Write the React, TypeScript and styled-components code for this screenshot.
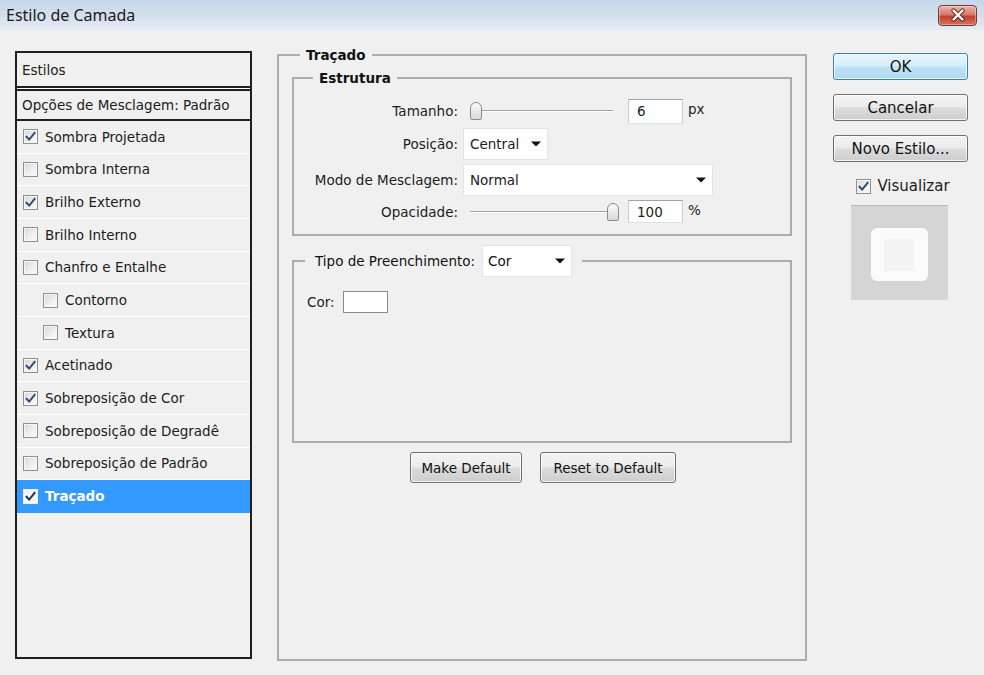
import React from "react";
import styled, { createGlobalStyle } from "styled-components";

const GlobalStyle = createGlobalStyle`
  * { box-sizing: border-box; }
  html, body { margin: 0; padding: 0; background: #f0f0f0; }
  body {
    font-family: "DejaVu Sans", "Liberation Sans", sans-serif;
    font-size: 13.5px;
    color: #1c1c1c;
  }
`;

const Window = styled.div`
  width: 984px;
  height: 675px;
  display: flex;
  flex-direction: column;
  background: #f0f0f0;
  overflow: hidden;
`;

const TitleBar = styled.div`
  height: 30px;
  flex: none;
  display: flex;
  align-items: center;
  justify-content: space-between;
  padding: 0 7px 0 6px;
  background: linear-gradient(to bottom, #c6d7ea 0%, #d3e0ee 55%, #e6ecf3 100%);
`;

const Title = styled.span`
  font-family: "Noto Sans", "DejaVu Sans", sans-serif;
  font-size: 16px;
  color: #1a1a1a;
`;

const CloseButton = styled.div`
  width: 39px;
  height: 21px;
  border: 1px solid #6e3a33;
  border-radius: 4px;
  background: linear-gradient(to bottom, #ecb3a6 0%, #d9796a 45%, #c3402d 55%, #d2735f 100%);
  box-shadow: inset 0 0 0 1px rgba(255, 255, 255, 0.35);
  display: flex;
  align-items: center;
  justify-content: center;
`;

const Main = styled.div`
  flex: 1;
  display: flex;
  align-items: stretch;
  gap: 25px;
  padding: 17px 16px 14px 15px;
`;

/* ---------- left list ---------- */

const StylePanel = styled.div`
  width: 237px;
  flex: none;
  margin: 4px 0 2px;
  border: 2px solid #1f1f1f;
  display: flex;
  flex-direction: column;
  background: #f0f0f0;
`;

const PanelHeader = styled.div`
  height: 35px;
  flex: none;
  display: flex;
  align-items: center;
  padding-left: 5px;
  border-bottom: 2px solid #1f1f1f;
`;

const BlendRow = styled.div`
  height: 33px;
  flex: none;
  display: flex;
  align-items: center;
  padding: 2px 0 0 5px;
  border-top: 1px solid #ffffff;
  border-bottom: 2px solid #1f1f1f;
  box-shadow: inset 0 2px 0 #1f1f1f;
`;

const StyleRow = styled.div<{ $indent?: boolean; $selected?: boolean }>`
  height: 32.67px;
  flex: none;
  display: flex;
  align-items: center;
  gap: 7px;
  padding-left: ${(p) => (p.$indent ? 26 : 6)}px;
  border-bottom: 1px solid ${(p) => (p.$selected ? "#3399ff" : "#ffffff")};
  background: ${(p) => (p.$selected ? "#3399ff" : "transparent")};
  color: ${(p) => (p.$selected ? "#ffffff" : "#1c1c1c")};
  font-weight: ${(p) => (p.$selected ? "bold" : "normal")};
`;

const CheckBox = styled.span<{ $light?: boolean }>`
  width: 15px;
  height: 15px;
  flex: none;
  display: flex;
  align-items: center;
  justify-content: center;
  border: 1px solid ${(p) => (p.$light ? "#e8f0ff" : "#8f9090")};
  background: ${(p) =>
    p.$light ? "#f4f6fb" : "linear-gradient(135deg, #d6d6d6 0%, #f0f0f0 60%, #fbfbfb 100%)"};
  box-shadow: inset 0 0 0 1px ${(p) => (p.$light ? "#ffffff" : "#f6f6f6")};
`;

/* ---------- middle groups ---------- */

const Group = styled.fieldset`
  margin: 0;
  min-width: 0;
  border: 2px solid #adadad;
`;

const MainGroup = styled(Group)`
  width: 530px;
  flex: none;
  padding: 0 13px;
`;

const Legend = styled.legend<{ $offset: number; $pad: number }>`
  margin-left: ${(p) => p.$offset}px;
  padding: 0 ${(p) => p.$pad}px;
  font-weight: bold;
  line-height: 16px;
  color: #111;
`;

const StructureGroup = styled(Group)`
  margin-top: 7px;
  padding: 12px 0 11px 0;
`;

const FormGrid = styled.div`
  display: grid;
  grid-template-columns: 164px 1fr;
  grid-template-rows: 26px 32px 32px 23px;
  column-gap: 5px;
  row-gap: 4px;
  align-items: center;
`;

const FieldLabel = styled.span`
  justify-self: end;
  white-space: nowrap;
`;

const ControlLine = styled.div`
  display: flex;
  align-items: center;
  height: 100%;
`;

const SliderTrack = styled.div`
  position: relative;
  width: 143px;
  height: 20px;
  margin-left: 7px;
  margin-right: 15px;
  display: flex;
  align-items: center;
`;

const TrackLine = styled.div`
  flex: 1;
  height: 2px;
  border-top: 1px solid #a3a3a3;
  border-bottom: 1px solid #ffffff;
`;

const Thumb = styled.div`
  position: absolute;
  top: 1px;
  width: 12px;
  height: 18px;
  border: 1px solid #8b8b8b;
  border-radius: 6px 6px 2px 2px;
  background: linear-gradient(to bottom, #fbfbfb, #d9d9d9);
`;

const NumberBox = styled.div<{ $h: number }>`
  width: 55px;
  height: ${(p) => p.$h}px;
  display: flex;
  align-items: center;
  padding-left: 8px;
  background: #ffffff;
  border: 1px solid;
  border-color: #98a5b4 #c7d0da #dbe1e7 #c7d0da;
  margin-right: 5px;
`;

const Unit = styled.span`
  margin-top: -4px;
`;

const Select = styled.div<{ $w: number; $pl?: number }>`
  width: ${(p) => p.$w}px;
  height: 32px;
  display: flex;
  align-items: center;
  justify-content: space-between;
  padding: 0 6px 0 ${(p) => p.$pl ?? 6}px;
  background: #ffffff;
  border: 1px solid #e4e4e4;
  font-weight: normal;
`;

const FillGroup = styled(Group)`
  margin-top: 9px;
  padding: 14px 13px 128px 13px;
`;

const LegendInner = styled.span`
  display: inline-flex;
  align-items: center;
  gap: 7px;
  font-weight: normal;
`;

const ColorRow = styled.div`
  display: flex;
  align-items: center;
  gap: 8px;
`;

const Swatch = styled.div`
  width: 45px;
  height: 22px;
  background: #ffffff;
  border: 1px solid #8c8c8c;
`;

const ButtonRow = styled.div`
  display: flex;
  justify-content: center;
  gap: 18px;
  margin-top: 9px;
  padding-left: 2px;
`;

const Button = styled.div<{ $w: number; $h?: number; $primary?: boolean; $big?: boolean }>`
  width: ${(p) => p.$w}px;
  height: ${(p) => p.$h ?? 31}px;
  display: flex;
  align-items: center;
  justify-content: center;
  border-radius: 3px;
  font-size: ${(p) => (p.$big ? 15 : 13.5)}px;
  color: #111;
  border: 1px solid ${(p) => (p.$primary ? "#3c7fb1" : "#707070")};
  background: ${(p) =>
    p.$primary
      ? "linear-gradient(to bottom, #e6f5fd 0%, #d6eefb 48%, #bfe3f7 52%, #aed9f1 100%)"
      : "linear-gradient(to bottom, #f4f4f4 0%, #ebebeb 48%, #dcdcdc 52%, #cdcdcd 100%)"};
  box-shadow: inset 0 0 0 1px rgba(255, 255, 255, 0.75);
`;

/* ---------- right column ---------- */

const SideColumn = styled.div`
  width: 135px;
  flex: none;
  margin: 6px 0 0 1px;
  display: flex;
  flex-direction: column;
  gap: 14px;
`;

const PreviewToggle = styled.div`
  display: flex;
  align-items: center;
  justify-content: center;
  gap: 6px;
  font-size: 15px;
  margin-top: 1px;
  padding-left: 5px;
`;

const PreviewBox = styled.div`
  align-self: center;
  width: 97px;
  height: 95px;
  margin: -4px 0 0 -3px;
  background: #d5d5d5;
  border-top: 1px solid #b9b9b9;
  display: flex;
  align-items: center;
  justify-content: center;
  padding-top: 3px;
`;

const PreviewShape = styled.div`
  width: 57px;
  height: 53px;
  border-radius: 6px;
  background: #fbfbfb;
  display: flex;
  align-items: center;
  justify-content: center;
`;

const PreviewInner = styled.div`
  width: 30px;
  height: 32px;
  background: #f3f3f3;
`;

/* ---------- icons ---------- */

const Check = ({ color = "#34487a" }: { color?: string }) => (
  <svg width="11" height="11" viewBox="0 0 11 11">
    <path d="M1.5 5.8 L4.2 8.6 L9.6 1.8" fill="none" stroke={color} strokeWidth="2" strokeLinecap="square" />
  </svg>
);

const Arrow = () => (
  <svg width="10" height="6" viewBox="0 0 10 6">
    <path d="M0 0.5 H10 L5 5.5 Z" fill="#111" />
  </svg>
);

const CloseX = () => (
  <svg width="18" height="14" viewBox="0 0 18 14">
    <path d="M4.5 2.5 L13.5 11.5 M13.5 2.5 L4.5 11.5" stroke="#5a2a24" strokeWidth="4.2" strokeLinecap="round" />
    <path d="M4.5 2.5 L13.5 11.5 M13.5 2.5 L4.5 11.5" stroke="#ffffff" strokeWidth="2.4" strokeLinecap="round" />
  </svg>
);

type StyleItem = { label: string; on?: boolean; indent?: boolean; selected?: boolean };

const styleItems: StyleItem[] = [
  { label: "Sombra Projetada", on: true },
  { label: "Sombra Interna" },
  { label: "Brilho Externo", on: true },
  { label: "Brilho Interno" },
  { label: "Chanfro e Entalhe" },
  { label: "Contorno", indent: true },
  { label: "Textura", indent: true },
  { label: "Acetinado", on: true },
  { label: "Sobreposição de Cor", on: true },
  { label: "Sobreposição de Degradê" },
  { label: "Sobreposição de Padrão" },
  { label: "Traçado", on: true, selected: true },
];

const Slider = ({ pos }: { pos: number }) => (
  <SliderTrack>
    <TrackLine />
    <Thumb style={{ left: pos }} />
  </SliderTrack>
);

export default function App() {
  return (
    <Window>
      <GlobalStyle />
      <TitleBar>
        <Title>Estilo de Camada</Title>
        <CloseButton>
          <CloseX />
        </CloseButton>
      </TitleBar>

      <Main>
        <StylePanel>
          <PanelHeader>Estilos</PanelHeader>
          <BlendRow>Opções de Mesclagem: Padrão</BlendRow>
          {styleItems.map((it) => (
            <StyleRow key={it.label} $indent={it.indent} $selected={it.selected}>
              <CheckBox $light={it.selected}>{it.on && <Check color={it.selected ? "#1d2f63" : "#34487a"} />}</CheckBox>
              <span>{it.label}</span>
            </StyleRow>
          ))}
        </StylePanel>

        <MainGroup>
          <Legend $offset={8} $pad={6}>Traçado</Legend>
          <StructureGroup>
            <Legend $offset={19} $pad={6}>Estrutura</Legend>
            <FormGrid>
              <FieldLabel>Tamanho:</FieldLabel>
              <ControlLine>
                <Slider pos={0} />
                <NumberBox $h={25}>6</NumberBox>
                <Unit>px</Unit>
              </ControlLine>

              <FieldLabel>Posição:</FieldLabel>
              <ControlLine>
                <Select $w={85}>
                  <span>Central</span>
                  <Arrow />
                </Select>
              </ControlLine>

              <FieldLabel>Modo de Mesclagem:</FieldLabel>
              <ControlLine>
                <Select $w={250}>
                  <span>Normal</span>
                  <Arrow />
                </Select>
              </ControlLine>

              <FieldLabel>Opacidade:</FieldLabel>
              <ControlLine>
                <Slider pos={137} />
                <NumberBox $h={23}>100</NumberBox>
                <Unit>%</Unit>
              </ControlLine>
            </FormGrid>
          </StructureGroup>

          <FillGroup>
            <Legend $offset={-2} $pad={10}>
              <LegendInner>
                <span>Tipo de Preenchimento:</span>
                <Select $w={90} $pl={5}>
                  <span>Cor</span>
                  <Arrow />
                </Select>
              </LegendInner>
            </Legend>
            <ColorRow>
              <span>Cor:</span>
              <Swatch />
            </ColorRow>
          </FillGroup>

          <ButtonRow>
            <Button $w={112}>Make Default</Button>
            <Button $w={136}>Reset to Default</Button>
          </ButtonRow>
        </MainGroup>

        <SideColumn>
          <Button $w={135} $h={27} $primary $big>OK</Button>
          <Button $w={135} $h={27} $big>Cancelar</Button>
          <Button $w={135} $h={27} $big>Novo Estilo...</Button>
          <PreviewToggle>
            <CheckBox>
              <Check />
            </CheckBox>
            <span>Visualizar</span>
          </PreviewToggle>
          <PreviewBox>
            <PreviewShape>
              <PreviewInner />
            </PreviewShape>
          </PreviewBox>
        </SideColumn>
      </Main>
    </Window>
  );
}
